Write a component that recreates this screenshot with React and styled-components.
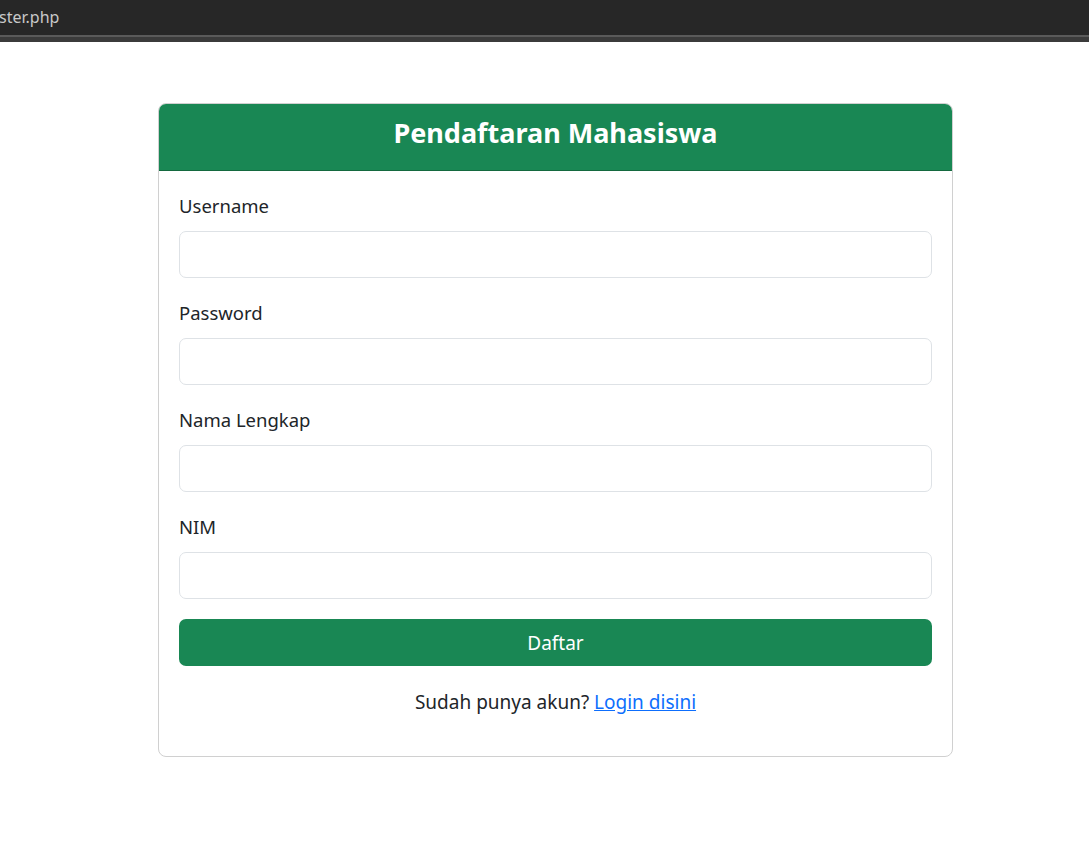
import React from "react";
import styled, { createGlobalStyle } from "styled-components";

const Global = createGlobalStyle`
  html, body { margin: 0; padding: 0; background: #fff; }
  body { font-family: "Noto Sans", "Open Sans", sans-serif; color: #212529; }
  * { box-sizing: border-box; }
`;

const TopBar = styled.div`
  height: 35px;
  background: #272727;
  color: #c9c9c9;
  font-size: 16px;
  line-height: 35px;
  margin-left: -1px;
  white-space: nowrap;
  overflow: hidden;
`;

const BarEdge = styled.div`
  height: 7px;
  background: #3b3b3b;
  border-top: 2px solid #5a5a5a;
`;

const Page = styled.div`
  padding: 61px 0 0 158px;
`;

const Card = styled.div`
  width: 795px;
  border: 1px solid #d0d0d0;
  border-radius: 8px;
  overflow: hidden;
  background: #fff;
`;

const CardHeader = styled.div`
  background: #198754;
  border-bottom: 1px solid #14693f;
  padding: 11px 20px 19px;
  text-align: center;
`;

const Title = styled.h3`
  margin: 0;
  color: #fff;
  font-size: 27px;
  font-weight: 700;
  line-height: 36px;
`;

const CardBody = styled.form`
  padding: 20px 20px 24px;
`;

const Field = styled.div`
  margin-bottom: 20px;
`;

const Label = styled.label`
  display: block;
  font-size: 18.5px;
  line-height: 30px;
  margin-bottom: 10px;
  color: #212529;
`;

const Input = styled.input`
  display: block;
  width: 100%;
  height: 47px;
  border: 1px solid #dee2e6;
  border-radius: 7px;
  padding: 7px 15px;
  font-size: 19px;
  font-family: inherit;
  outline: none;
  background: #fff;
`;

const Button = styled.button`
  display: block;
  width: 100%;
  height: 47px;
  border: none;
  border-radius: 7px;
  background: #198754;
  color: #fff;
  font-size: 19px;
  font-family: inherit;
  cursor: pointer;
`;

const Footer = styled.p`
  margin: 21px 0 15px;
  text-align: center;
  font-size: 19px;
  line-height: 30px;
`;

const Link = styled.a`
  color: #0d6efd;
  text-decoration: underline;
`;

const fields = ["Username", "Password", "Nama Lengkap", "NIM"];

export default function App() {
  return (
    <>
      <Global />
      <TopBar>ster.php</TopBar>
      <BarEdge />
      <Page>
        <Card>
          <CardHeader>
            <Title>Pendaftaran Mahasiswa</Title>
          </CardHeader>
          <CardBody onSubmit={(e) => e.preventDefault()}>
            {fields.map((f) => (
              <Field key={f}>
                <Label>{f}</Label>
                <Input type={f === "Password" ? "password" : "text"} />
              </Field>
            ))}
            <Button type="submit">Daftar</Button>
            <Footer>
              Sudah punya akun? <Link href="#">Login disini</Link>
            </Footer>
          </CardBody>
        </Card>
      </Page>
    </>
  );
}
